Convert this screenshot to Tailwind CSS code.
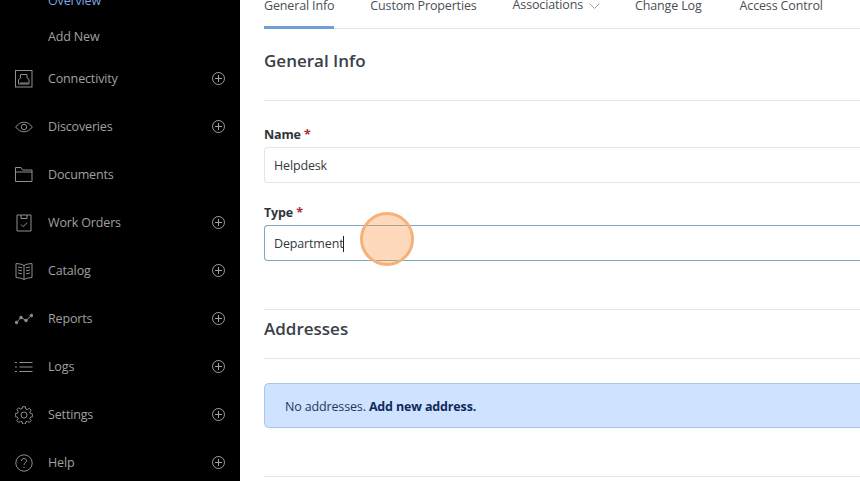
<!DOCTYPE html>
<html lang="en">
<head>
  <meta charset="UTF-8">
  <title>General Info</title>
  <script src="https://cdn.jsdelivr.net/npm/@tailwindcss/browser@4"></script>
</head>
<body class="h-[481px] w-[860px] overflow-hidden bg-white font-['Open_Sans','Noto_Sans',sans-serif] text-[12.5px] tracking-[-0.15px]">
  <div class="relative flex h-[481px] w-[860px] overflow-hidden">
    <!-- Sidebar -->
    <aside class="h-full w-[240px] shrink-0 bg-black text-[#a0a0a0]">
      <div class="-mt-[17px] flex h-[36px] items-center pl-[48px] text-[#7ea6e0]">Overview</div>
      <div class="flex h-[36px] items-center pl-[48px]">Add New</div>
      <div class="flex flex-col">
        <div class="flex h-[48px] items-center pl-[15px] pr-[15px]">
          <svg class="h-[18px] w-[18px] shrink-0 opacity-90" viewBox="0 0 18 18" fill="none" stroke="currentColor" stroke-width="1"><rect x="0.5" y="0.500" width="16.500" height="16.500"/><path d="M3.500 14V9.500l2-1.500V4.500h6.500V8l2 1.500V14zM6 14v-2M8 14v-2M10 14v-2M12 14v-2"/></svg>
          <span class="ml-[15px] flex-1">Connectivity</span>
          <svg class="-mt-px h-[13px] w-[13px]" viewBox="0 0 13 13" fill="none" stroke="currentColor"><circle cx="6.500" cy="6.500" r="6"/><path d="M6.500 3v7M3 6.500h7"/></svg>
        </div>
        <div class="flex h-[48px] items-center pl-[15px] pr-[15px]">
          <svg class="h-[18px] w-[18px] shrink-0 opacity-90" viewBox="0 0 18 18" fill="none" stroke="currentColor"><path d="M0.7 9C3 5.7 6 4.2 9 4.2s6 1.5 8.300 4.800C15 12.300 12 13.800 9 13.800S3 12.300 0.700 9z"/><circle cx="9" cy="9" r="2.700"/></svg>
          <span class="ml-[15px] flex-1">Discoveries</span>
          <svg class="-mt-px h-[13px] w-[13px]" viewBox="0 0 13 13" fill="none" stroke="currentColor"><circle cx="6.500" cy="6.500" r="6"/><path d="M6.500 3v7M3 6.500h7"/></svg>
        </div>
        <div class="flex h-[48px] items-center pl-[15px] pr-[15px]">
          <svg class="h-[18px] w-[18px] shrink-0 opacity-90" viewBox="0 0 18 18" fill="none" stroke="currentColor"><path d="M.5 15.500V1.500h5.500l1.500 2.500h9.500v11.500zM.5 6h16.500"/></svg>
          <span class="ml-[15px] flex-1">Documents</span>
        </div>
        <div class="flex h-[48px] items-center pl-[15px] pr-[15px]">
          <svg class="h-[18px] w-[18px] shrink-0 opacity-90" viewBox="0 0 18 18" fill="none" stroke="currentColor"><path d="M2 1h14v16H2zM6 1v3.500h6V1M6 10.500l2.200 2.200 4-4.200"/></svg>
          <span class="ml-[15px] flex-1">Work Orders</span>
          <svg class="-mt-px h-[13px] w-[13px]" viewBox="0 0 13 13" fill="none" stroke="currentColor"><circle cx="6.500" cy="6.500" r="6"/><path d="M6.500 3v7M3 6.500h7"/></svg>
        </div>
        <div class="flex h-[48px] items-center pl-[15px] pr-[15px]">
          <svg class="h-[18px] w-[18px] shrink-0 opacity-90" viewBox="0 0 18 18" fill="none" stroke="currentColor"><path d="M9 3.500C6.500 2 4 1.800 1 1.500v14c3 .3 5.500.5 8 2 2.500-1.500 5-1.700 8-2v-14c-3 .3-5.500.5-8 2zM9 3.500v14M3 5l4 .8M3 8l4 .8M3 11l4 .8M15 5l-4 .8M15 8l-4 .8M15 11l-4 .8"/></svg>
          <span class="ml-[15px] flex-1">Catalog</span>
          <svg class="-mt-px h-[13px] w-[13px]" viewBox="0 0 13 13" fill="none" stroke="currentColor"><circle cx="6.500" cy="6.500" r="6"/><path d="M6.500 3v7M3 6.500h7"/></svg>
        </div>
        <div class="flex h-[48px] items-center pl-[15px] pr-[15px]">
          <svg class="h-[18px] w-[18px] shrink-0 opacity-90" viewBox="0 0 18 18" fill="none" stroke="currentColor"><path d="M1.500 12.500L6 7.500l5 3 5.500-5"/><g fill="currentColor"><circle cx="1.500" cy="12.500" r="1.300"/><circle cx="6" cy="7.500" r="1.300"/><circle cx="11" cy="10.500" r="1.300"/><circle cx="16.500" cy="5.500" r="1.300"/></g></svg>
          <span class="ml-[15px] flex-1">Reports</span>
          <svg class="-mt-px h-[13px] w-[13px]" viewBox="0 0 13 13" fill="none" stroke="currentColor"><circle cx="6.500" cy="6.500" r="6"/><path d="M6.500 3v7M3 6.500h7"/></svg>
        </div>
        <div class="flex h-[48px] items-center pl-[15px] pr-[15px]">
          <svg class="h-[18px] w-[18px] shrink-0 opacity-90" viewBox="0 0 18 18" fill="none" stroke="currentColor"><path d="M4.500 4.500H17.500M4.500 9H17.500M4.500 13.500H17.500M0 4.500h2M0 9h2M0 13.500h2"/></svg>
          <span class="ml-[15px] flex-1">Logs</span>
          <svg class="-mt-px h-[13px] w-[13px]" viewBox="0 0 13 13" fill="none" stroke="currentColor"><circle cx="6.500" cy="6.500" r="6"/><path d="M6.500 3v7M3 6.500h7"/></svg>
        </div>
        <div class="flex h-[48px] items-center pl-[15px] pr-[15px]">
          <svg class="h-[18px] w-[18px] shrink-0 opacity-90" viewBox="0 0 18 18" fill="none" stroke="currentColor"><circle cx="9" cy="9" r="3"/><path d="M7.700 .7h2.600l.5 2.300 1.500.6 2-1.300 1.800 1.800-1.300 2 .6 1.500 2.300.5v2.600l-2.300.5-.6 1.500 1.300 2-1.800 1.800-2-1.300-1.500.6-.5 2.300H7.700l-.5-2.300-1.500-.6-2 1.300-1.800-1.800 1.300-2-.6-1.500-2.300-.5V7.600L2.600 7.100l.6-1.500-1.300-2 1.800-1.800 2 1.300 1.500-.6z"/></svg>
          <span class="ml-[15px] flex-1">Settings</span>
          <svg class="-mt-px h-[13px] w-[13px]" viewBox="0 0 13 13" fill="none" stroke="currentColor"><circle cx="6.500" cy="6.500" r="6"/><path d="M6.500 3v7M3 6.500h7"/></svg>
        </div>
        <div class="flex h-[48px] items-center pl-[15px] pr-[15px]">
          <svg class="h-[18px] w-[18px] shrink-0 opacity-90" viewBox="0 0 18 18" fill="none" stroke="currentColor"><circle cx="9" cy="9" r="8.200"/><path d="M6.500 7c0-1.500 1.100-2.500 2.500-2.500s2.500 1 2.500 2.300c0 2-2.500 2-2.500 4.200M9 12.600v1.400"/></svg>
          <span class="ml-[15px] flex-1">Help</span>
          <svg class="-mt-px h-[13px] w-[13px]" viewBox="0 0 13 13" fill="none" stroke="currentColor"><circle cx="6.500" cy="6.500" r="6"/><path d="M6.500 3v7M3 6.500h7"/></svg>
        </div>
      </div>
    </aside>

    <!-- Main -->
    <main class="min-w-0 flex-1 pl-[24px] text-[#333a41]">
      <nav class="-mt-[5px] flex h-[34px] gap-[36px] border-b border-[#e3e5e7] text-[#4a4f55]">
        <div class="h-[34px] border-b-[3px] border-[#6f9fd6] pt-[2px]">General Info</div>
        <div class="pt-[2px]">Custom Properties</div>
        <div class="flex h-[19px] items-center gap-[6px] pt-[2px]">Associations
          <svg class="h-[6px] w-[11px]" viewBox="0 0 11 6" fill="none" stroke="#9aa0a6"><path d="M.5.5l5 5 5-5"/></svg>
        </div>
        <div class="-ml-px pt-[2px]">Change Log</div>
        <div class="ml-[2px] pt-[2px]">Access Control</div>
      </nav>

      <section class="flex h-[72px] items-center border-b border-[#e3e5e7]">
        <h2 class="-mt-[8px] text-[17px] font-semibold tracking-normal text-[#3a4047]">General Info</h2>
      </section>

      <form class="pt-[24px]">
        <label class="block h-[22px] pt-px font-bold text-[#2f353b]">Name <span class="text-[#b02a37]">*</span></label>
        <div class="flex h-[36px] items-center rounded-l-[4px] border border-r-0 border-[#e3e5e7] pl-[9px] pt-[2px]">Helpdesk</div>
        <label class="mt-[20px] block h-[22px] pt-px font-bold text-[#2f353b]">Type <span class="text-[#b02a37]">*</span></label>
        <div class="flex h-[36px] items-center rounded-l-[4px] border border-r-0 border-[#7fa8bd] pl-[9px] pt-[2px]">Department<span class="h-[16px] w-px bg-[#222]"></span></div>
      </form>

      <section class="mt-[48px] flex h-[50px] items-center border-y border-[#e3e5e7]">
        <h2 class="-mt-[10px] text-[17px] font-semibold tracking-normal text-[#3a4047]">Addresses</h2>
      </section>

      <div class="mt-[24px] flex h-[45px] items-center rounded-l-[5px] border border-r-0 border-[#a9c6e8] bg-[#cfe2ff] pl-[20px] pt-[3px] text-[#23395b]">
        <span>No addresses. <a class="font-bold text-[#0f2a5c]">Add new address.</a></span>
      </div>

      <div class="mt-[48px] border-t border-[#e3e5e7]"></div>
    </main>

    <!-- Click highlight -->
    <div class="absolute left-[360px] top-[212px] h-[54px] w-[54px] rounded-full border-[3px] border-[#f4b27a] bg-[#fb923c]/35"></div>
  </div>
</body>
</html>
